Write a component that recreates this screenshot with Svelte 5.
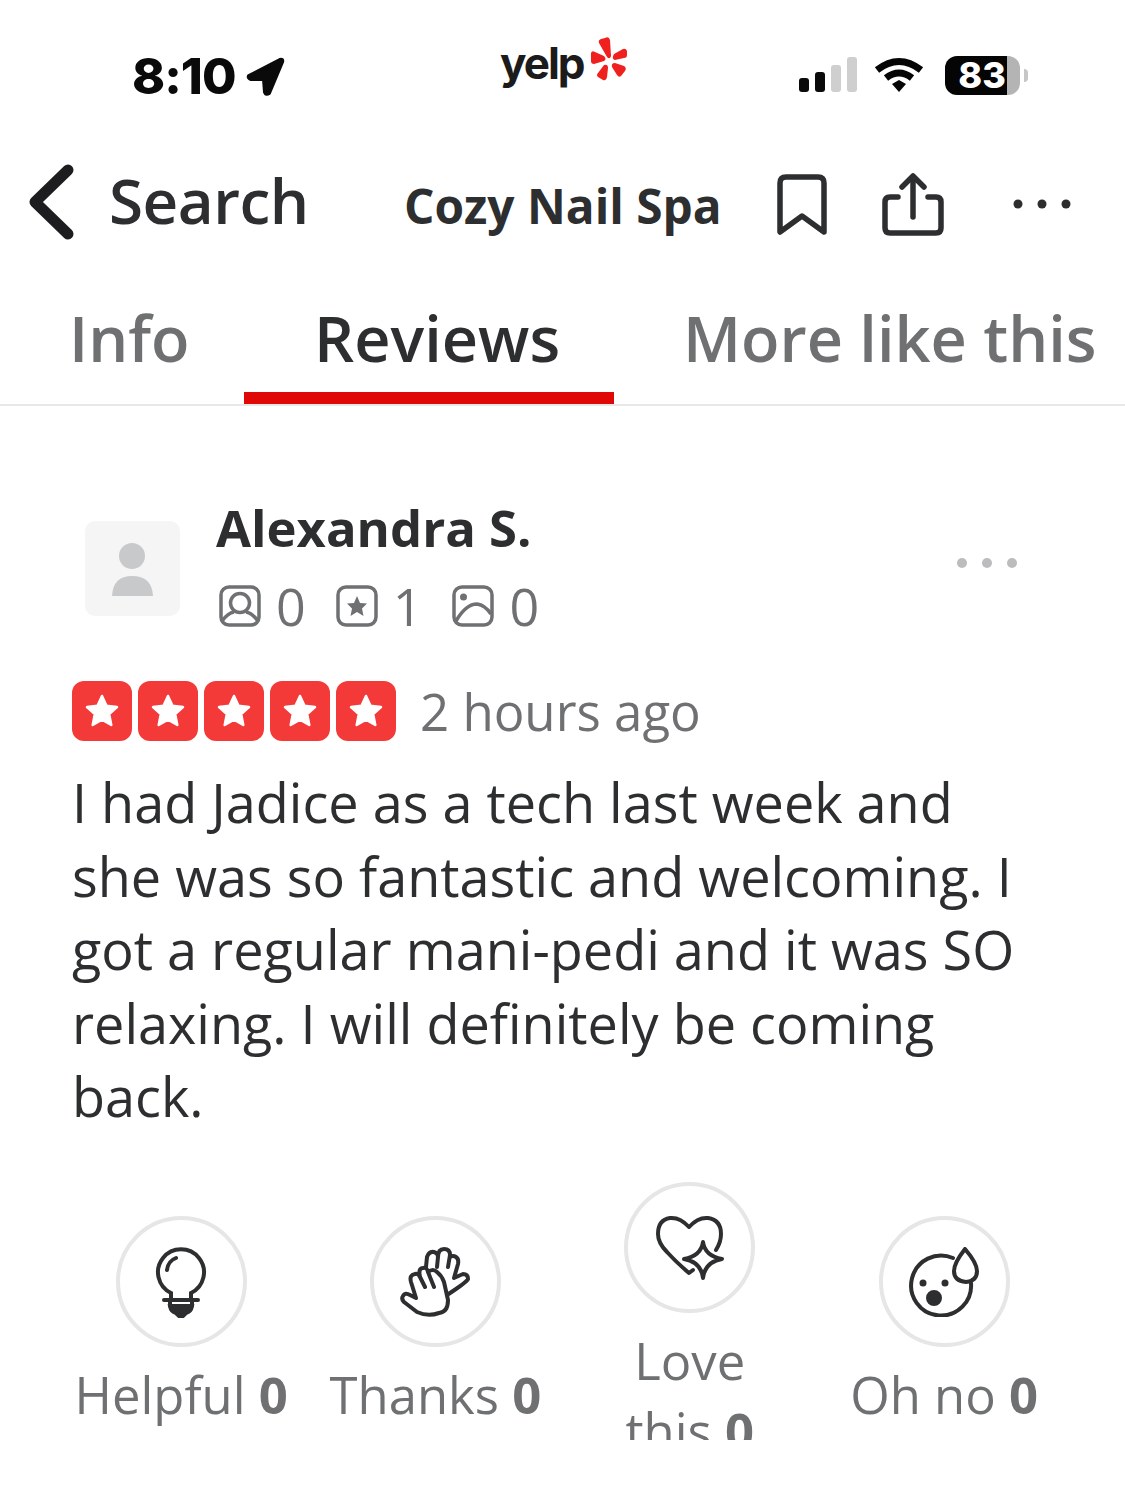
<script lang="ts">
  const lines = [
    'I had Jadice as a tech last week and',
    'she was so fantastic and welcoming. I',
    'got a regular mani-pedi and it was SO',
    'relaxing. I will definitely be coming',
    'back.'
  ];
  const stars = [0, 1, 2, 3, 4];
</script>

<div class="page">
  <div class="status">
    <div class="time">
      <span>8:10</span>
      <svg width="40" height="42" viewBox="0 0 40 42"><path d="M3 21 L34 5 Q37 4 36 7 L23 38 Q20 40 19 37 L18 24 L5 24 Q2 23 3 21 Z" fill="#0a0a0a" stroke="#0a0a0a" stroke-width="4" stroke-linejoin="round"/></svg>
    </div>
    <div class="brand">
      <span class="yelp">yelp</span>
      <svg width="38" height="46" viewBox="0 0 38 46" fill="#f0201f">
        <path d="M15 2 Q19 0 20 4 L21 20 Q20 24 17 21 L9 7 Q8 4 11 3 Z"/>
        <path d="M24 18 L33 13 Q36 12 37 15 L37 19 Q37 22 34 22 L25 24 Q21 23 24 18 Z"/>
        <path d="M1 17 Q2 14 5 16 L14 20 Q17 23 14 25 L4 28 Q1 28 1 25 Z"/>
        <path d="M25 27 L34 30 Q37 32 35 35 L31 40 Q29 42 27 39 L22 31 Q21 27 25 27 Z"/>
        <path d="M14 29 Q18 28 18 32 L17 41 Q16 45 13 44 L8 41 Q6 39 8 37 Z"/>
      </svg>
    </div>
    <div class="indicators">
      <div class="signal">
        <i class="bar on h13"></i><i class="bar on h19"></i><i class="bar h27"></i><i class="bar h34"></i>
      </div>
      <svg width="50" height="36" viewBox="0 0 50 36" fill="none" stroke="#050505" stroke-width="7">
        <path d="M3 13 Q25 -4 47 13"/>
        <path d="M12 21 Q25 11 38 21"/>
        <path d="M18 27 L25 23 L32 27 L25 35 Z" fill="#050505" stroke="none"/>
      </svg>
      <div class="battery">
        <div class="level"><span>83</span></div>
        <div class="rest"></div>
      </div>
    </div>
  </div>

  <div class="nav">
    <svg class="back" width="46" height="76" viewBox="0 0 46 76" fill="none"><path d="M40 6 L7 38 L40 70" stroke="#1d1d1f" stroke-width="11" stroke-linecap="round" stroke-linejoin="round"/></svg>
    <span class="search">Search</span>
    <span class="biz">Cozy Nail Spa</span>
    <svg class="bookmark" width="50" height="62" viewBox="0 0 50 62" fill="none"><path d="M3 58 L3 9 Q3 3 9 3 L41 3 Q47 3 47 9 L47 58 L25 42 Z" stroke="#2d2e2f" stroke-width="5.500" stroke-linejoin="round"/></svg>
    <svg class="share" width="62" height="64" viewBox="0 0 62 64" fill="none" stroke="#2d2e2f" stroke-width="5.500" stroke-linecap="round" stroke-linejoin="round">
      <path d="M16 24 L8 24 Q3 24 3 29 L3 55 Q3 60 8 60 L54 60 Q59 60 59 55 L59 29 Q59 24 54 24 L46 24"/>
      <path d="M31 44 L31 4"/>
      <path d="M20 14 L31 3 L42 14"/>
    </svg>
    <svg class="more" width="60" height="10" viewBox="0 0 60 10" fill="#2d2e2f"><circle cx="5" cy="5" r="4.500"/><circle cx="29" cy="5" r="4.500"/><circle cx="53" cy="5" r="4.500"/></svg>
  </div>

  <div class="tabs">
    <div class="tab info">Info</div>
    <div class="tab active">Reviews</div>
    <div class="tab like">More like this</div>
  </div>

  <div class="review">
    <div class="user">
      <div class="avatar">
        <svg width="44" height="54" viewBox="0 0 44 54" fill="#c8c9ca"><circle cx="21" cy="14" r="13"/><path d="M1 54 Q2 34 21 34 Q41 34 42 54 Z"/></svg>
      </div>
      <div class="who">
        <div class="name">Alexandra S.</div>
        <div class="counts">
          <svg width="42" height="42" viewBox="0 0 42 42" fill="none" stroke="#6e7072" stroke-width="3.500">
            <rect x="2" y="2" width="38" height="38" rx="8"/>
            <circle cx="21" cy="18" r="9.500"/>
            <path d="M3 36 Q9 28 15 27 M39 36 Q33 28 27 27"/>
          </svg>
          <span class="n first">0</span>
          <svg width="42" height="42" viewBox="0 0 42 42" fill="none" stroke="#6e7072" stroke-width="3.500">
            <rect x="2" y="2" width="38" height="38" rx="8"/>
            <path d="M21 11 L24 18 L31 18.500 L26 23.500 L27.500 31 L21 27 L14.500 31 L16 23.500 L11 18.500 L18 18 Z" fill="#6e7072" stroke="none"/>
          </svg>
          <span class="n second">1</span>
          <svg width="42" height="42" viewBox="0 0 42 42" fill="none" stroke="#6e7072" stroke-width="3.500">
            <rect x="2" y="2" width="38" height="38" rx="8"/>
            <circle cx="11.500" cy="12" r="3.500" fill="#6e7072" stroke="none"/>
            <path d="M4 36 Q14 19 25 19 Q33 20 39 29"/>
          </svg>
          <span class="n">0</span>
        </div>
      </div>
      <svg class="review-more" width="60" height="10" viewBox="0 0 60 10" fill="#bbbcbd"><circle cx="5" cy="5" r="5"/><circle cx="30" cy="5" r="5"/><circle cx="55" cy="5" r="5"/></svg>
    </div>

    <div class="rating">
      {#each stars as s (s)}
        <div class="star">
          <svg width="36" height="36" viewBox="0 0 36 36"><path d="M18 3 L22.500 12.800 L33 14 L25.200 21.200 L27.300 32 L18 26.600 L8.700 32 L10.800 21.200 L3 14 L13.500 12.800 Z" fill="#fff" stroke="#fff" stroke-width="2.500" stroke-linejoin="round"/></svg>
        </div>
      {/each}
      <span class="ago">2 hours ago</span>
    </div>

    <div class="text">
      {#each lines as line}
        <div>{line}</div>
      {/each}
    </div>
  </div>

  <div class="reactions">
    <div class="reaction low">
      <div class="circle">
        <svg width="54" height="72" viewBox="0 0 54 72" fill="none" stroke="#2d2e2f" stroke-width="4" stroke-linecap="round">
          <path d="M17 53 L17 47 A23 23 0 1 1 37 47 L37 53"/>
          <path d="M13 24 Q14 15 22 12"/>
          <path d="M10 54 L44 54"/>
          <path d="M16 54 L16 60 M38 54 L38 60"/>
          <path d="M16 60 L38 60 Q37 66 32 67 L29 70 L25 70 L22 67 Q17 66 16 60 Z" fill="#2d2e2f"/>
        </svg>
      </div>
      <div class="label">Helpful <b>0</b></div>
    </div>
    <div class="reaction low">
      <div class="circle">
        <svg width="70" height="72" viewBox="0 0 70 72" fill="none" stroke="#2d2e2f" stroke-width="4" stroke-linecap="round" stroke-linejoin="round">
          <path d="M3 50 Q5 46 10 49 L16 52 L11 36 Q9 29 15 28 Q18 27 20 31 L25 41 L20 31 Q18 22 23 22 Q27 21 28 26 L34 41 L28 26 Q33 22 37 26 Q42 30 44 36 L48 54 Q48 66 39 67 Q28 71 17 66 L4 56 Q1 53 3 50 Z"/>
          <path d="M26 21 L27 11 Q29 5 34 6 Q38 7 38 11 L37 21 M38 11 Q38 3 44 3 Q50 3 50 9 L48 21 M50 11 Q53 9 56 11 Q59 13 58 18 L54 32 L63 28 Q68 28 68 33 Q67 36 47 49"/>
        </svg>
      </div>
      <div class="label">Thanks <b>0</b></div>
    </div>
    <div class="reaction">
      <div class="circle">
        <svg width="68" height="66" viewBox="0 0 68 66" fill="none" stroke="#2d2e2f" stroke-width="4" stroke-linecap="round" stroke-linejoin="round">
          <path d="M33 12 Q24 2 14 3 Q2 5 2 19 Q2 28 11 37 Q20 47 33 58 L37 55 M33 12 Q42 2 52 3 Q65 5 65 19 Q65 27 60 35"/>
          <path d="M47 27 Q49 41 66 44 Q49 47 47 63 Q45 47 28 44 Q45 41 47 27 Z"/>
        </svg>
      </div>
      <div class="label">Love this <b>0</b></div>
    </div>
    <div class="reaction low">
      <div class="circle">
        <svg width="70" height="70" viewBox="0 0 70 70" fill="none" stroke="#2d2e2f" stroke-width="4" stroke-linecap="round" stroke-linejoin="round">
          <path d="M44 11 A30 30 0 1 0 62 36"/>
          <path d="M56 2 Q68 16 68 24 Q68 34 57 35 Q45 34 45 24 Q45 16 56 2 Z" fill="#fff"/>
          <circle cx="14" cy="36" r="3.500" fill="#2d2e2f" stroke="none"/>
          <circle cx="36" cy="36" r="3.500" fill="#2d2e2f" stroke="none"/>
          <circle cx="25" cy="51" r="6" fill="#2d2e2f"/>
        </svg>
      </div>
      <div class="label">Oh no <b>0</b></div>
    </div>
  </div>
</div>

<style>
  :global(body) {
    margin: 0;
    background: #fff;
  }

  .page {
    width: 1125px;
    height: 1504px;
    overflow: hidden;
    font-family: 'Open Sans', sans-serif;
    color: #2d2e2f;
  }

  /* ---- status bar ---- */

  .status {
    height: 130px;
    box-sizing: border-box;
    padding: 38px 98px 0 132px;
    display: flex;
    align-items: flex-start;
  }

  .time {
    width: 368px;
    display: flex;
    align-items: center;
    gap: 10px;
    margin-top: 10px;
    font-family: Inter, sans-serif;
    font-weight: 800;
    font-size: 50px;
    letter-spacing: -1px;
    line-height: 56px;
    color: #0a0a0a;
  }

  .brand {
    width: 299px;
    display: flex;
    align-items: flex-start;
    gap: 6px;
    margin-top: -2px;
  }

  .yelp {
    font-family: Inter, sans-serif;
    font-weight: 700;
    font-size: 44px;
    letter-spacing: -2px;
    line-height: 60px;
    margin-top: -3px;
    color: #1b1b1b;
  }

  .indicators {
    display: flex;
    align-items: flex-start;
    padding-top: 19px;
  }

  .signal {
    display: flex;
    align-items: flex-end;
    gap: 6.500px;
    height: 35px;
    margin-right: 17px;
  }

  .bar {
    display: block;
    width: 9.500px;
    background: #cfcfcf;
    border-radius: 3px;
  }

  .bar.on {
    background: #0a0a0a;
  }

  .h13 { height: 14px; }
  .h19 { height: 20px; }
  .h27 { height: 27px; }
  .h34 { height: 35px; }

  .battery {
    display: flex;
    height: 39px;
    margin: -1px 0 0 21px;
    position: relative;
  }

  .battery::after {
    content: '';
    position: absolute;
    left: 79px;
    top: 13px;
    width: 4px;
    height: 13px;
    border-radius: 0 4px 4px 0;
    background: #c6c6c6;
  }

  .level {
    width: 62px;
    background: #050505;
    border-radius: 12px 0 0 12px;
    display: flex;
    align-items: center;
    justify-content: center;
  }

  .level span {
    font-family: Inter, sans-serif;
    font-weight: 800;
    font-size: 36px;
    line-height: 39px;
    color: #fff;
    margin-left: 13px;
  }

  .rest {
    width: 13px;
    background: #b4b4b4;
    border-radius: 0 12px 12px 0;
  }

  /* ---- nav ---- */

  .nav {
    height: 146px;
    box-sizing: border-box;
    display: flex;
    align-items: flex-start;
    position: relative;
    padding-left: 28px;
  }

  .back {
    margin-top: 34px;
    margin-right: 35px;
  }

  .search {
    font-weight: 600;
    font-size: 62px;
    letter-spacing: -0.500px;
    line-height: 72px;
    margin-top: 34px;
    width: 295px;
    color: #2d2e2f;
  }

  .biz {
    font-weight: 700;
    font-size: 47.800px;
    line-height: 62px;
    margin-top: 45px;
    width: 373px;
    white-space: nowrap;
  }

  .bookmark {
    margin-top: 44px;
    margin-right: 55px;
  }

  .share {
    margin-top: 43px;
    margin-right: 69px;
  }

  .more {
    margin-top: 69px;
  }

  /* ---- tabs ---- */

  .tabs {
    height: 130px;
    box-sizing: border-box;
    border-bottom: 2px solid #e8e8e8;
    display: flex;
    align-items: flex-start;
    padding-left: 69px;
  }

  .tab {
    font-weight: 600;
    font-size: 63px;
    line-height: 76px;
    margin-top: 24px;
    color: #6e7072;
    white-space: nowrap;
  }

  .tab.info {
    width: 175px;
  }

  .tab.active {
    width: 370px;
    box-sizing: border-box;
    height: 104px;
    padding-left: 70px;
    border-bottom: 12px solid #e00707;
    color: #2d2e2f;
  }

  .tab.like {
    margin-left: 69px;
  }

  /* ---- review ---- */

  .review {
    padding: 0 73px;
    height: 776px;
  }

  .user {
    display: flex;
    position: relative;
    padding: 88px 0 0 12px;
  }

  .avatar {
    width: 95px;
    height: 95px;
    margin-top: 27px;
    background: #f5f5f5;
    border-radius: 10px;
    display: flex;
    align-items: flex-end;
    justify-content: center;
  }

  .avatar svg {
    margin-bottom: 20px;
  }

  .who {
    margin-left: 36px;
  }

  .name {
    font-weight: 700;
    font-size: 50.800px;
    line-height: 68px;
  }

  .counts {
    display: flex;
    align-items: center;
    height: 50px;
    margin-top: 19px;
    margin-left: 3px;
    font-size: 52px;
    color: #6e7072;
  }

  .n {
    margin-left: 15px;
    line-height: 50px;
  }

  .n.first {
    margin-right: 30px;
  }

  .n.second {
    margin-left: 15px;
    margin-right: 30px;
  }

  .review-more {
    position: absolute;
    left: 884px;
    top: 152px;
  }

  .rating {
    display: flex;
    align-items: center;
    gap: 6px;
    margin-top: 50px;
    margin-left: -1px;
  }

  .star {
    width: 60px;
    height: 60px;
    border-radius: 12px;
    background: #f43939;
    display: flex;
    align-items: center;
    justify-content: center;
  }

  .ago {
    margin-left: 18px;
    font-size: 51px;
    line-height: 60px;
    color: #6e7072;
    white-space: nowrap;
  }

  .text {
    margin-left: -1px;
    margin-top: 25px;
    font-size: 54px;
    line-height: 73.500px;
    white-space: nowrap;
  }

  /* ---- reactions ---- */

  .reactions {
    display: grid;
    grid-template-columns: repeat(4, 254.300px);
    margin-left: 54px;
    height: 258px;
    overflow: hidden;
    align-items: start;
  }

  .reaction {
    display: flex;
    flex-direction: column;
    align-items: center;
    padding: 0 30px;
    box-sizing: border-box;
  }

  .reaction.low {
    padding: 34px 0 0;
  }

  .circle {
    width: 131px;
    height: 131px;
    box-sizing: border-box;
    border: 4px solid #e6e6e6;
    border-radius: 50%;
    display: flex;
    align-items: center;
    justify-content: center;
  }

  .label {
    margin-top: 13px;
    font-size: 50.800px;
    line-height: 70px;
    color: #6e7072;
    text-align: center;
    white-space: nowrap;
  }

  .reaction:not(.low) .label {
    white-space: normal;
  }

  .label b {
    font-weight: 700;
  }
</style>
